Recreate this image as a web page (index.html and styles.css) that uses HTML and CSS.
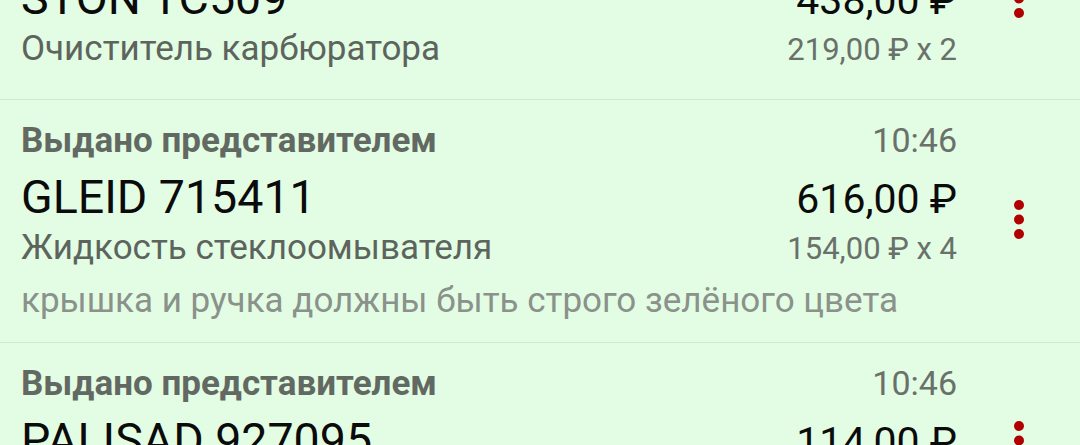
FILE: index.html
```html
<!DOCTYPE html>
<html lang="ru">
<head>
    <meta charset="UTF-8">
    <meta name="viewport" content="width=device-width, initial-scale=1.0">
    <title>Выдачи</title>
    <link rel="stylesheet" href="styles.css">
</head>
<body>
    <ul class="orders">
        <li class="order">
            <div class="info">
                <div class="row top">
                    <span class="status">Выдано представителем</span>
                    <span class="time">10:41</span>
                </div>
                <div class="row main">
                    <span class="code">STON TC509</span>
                    <span class="sum">438,00 ₽</span>
                </div>
                <div class="row sub">
                    <span class="name">Очиститель карбюратора</span>
                    <span class="price">219,00 ₽ x 2</span>
                </div>
            </div>
            <button class="more" type="button" aria-label="Меню">
                <svg width="12" height="39" viewBox="0 0 12 39"><circle cx="6" cy="5" r="5"/><circle cx="6" cy="19.5" r="5"/><circle cx="6" cy="34" r="5"/></svg>
            </button>
        </li>
        <li class="order">
            <div class="info">
                <div class="row top">
                    <span class="status">Выдано представителем</span>
                    <span class="time">10:46</span>
                </div>
                <div class="row main">
                    <span class="code">GLEID 715411</span>
                    <span class="sum">616,00 ₽</span>
                </div>
                <div class="row sub">
                    <span class="name">Жидкость стеклоомывателя</span>
                    <span class="price">154,00 ₽ x 4</span>
                </div>
                <p class="note">крышка и ручка должны быть строго зелёного цвета</p>
            </div>
            <button class="more" type="button" aria-label="Меню">
                <svg width="12" height="39" viewBox="0 0 12 39"><circle cx="6" cy="5" r="5"/><circle cx="6" cy="19.5" r="5"/><circle cx="6" cy="34" r="5"/></svg>
            </button>
        </li>
        <li class="order">
            <div class="info">
                <div class="row top">
                    <span class="status">Выдано представителем</span>
                    <span class="time">10:46</span>
                </div>
                <div class="row main">
                    <span class="code">PALISAD 927095</span>
                    <span class="sum">114,00 ₽</span>
                </div>
                <div class="row sub">
                    <span class="name">Губка для мытья</span>
                    <span class="price">57,00 ₽ x 2</span>
                </div>
            </div>
            <button class="more" type="button" aria-label="Меню">
                <svg width="12" height="39" viewBox="0 0 12 39"><circle cx="6" cy="5" r="5"/><circle cx="6" cy="19.5" r="5"/><circle cx="6" cy="34" r="5"/></svg>
            </button>
        </li>
    </ul>
</body>
</html>
```
FILE: styles.css
```css
*{box-sizing: border-box;}
html,body{margin: 0;padding: 0;}
body{background-color: #e2fde3;font-family: Roboto, 'Noto Sans', sans-serif;overflow: hidden;}

/* список прокручен: первая карточка уходит за верх экрана */
.orders{list-style: none;margin: -99px 0 0;padding: 0;}
.order{display: flex;align-items: center;padding-left: 21px;border-bottom: 1px solid #cfe9d0;}
.info{flex: 1;min-width: 0;padding: 18px 0 32px;}

.row{display: flex;justify-content: space-between;align-items: baseline;white-space: nowrap;}
.top{line-height: 46px;}
.main{line-height: 66px;}
.sub{line-height: 36px;}

.status{font-size: 35px;font-weight: 700;color: #626962;}
.time{font-size: 34px;line-height: 44px;color: #6a706a;}
.code{font-size: 46.5px;color: #0b0b0b;}
.sum{font-size: 41px;line-height: 62px;color: #0b0b0b;}
.name{font-size: 35px;color: #5d645d;}
.price{font-size: 31px;line-height: 33px;color: #6a706a;}

.note{margin: 26px 0 0;font-size: 35px;line-height: 18px;color: #8b918b;white-space: nowrap;}

.more{flex: none;width: 123px;padding: 0;border: none;background: none;display: flex;justify-content: center;}
.more svg{display: block;margin-bottom: 3px;fill: #b00000;}
```
